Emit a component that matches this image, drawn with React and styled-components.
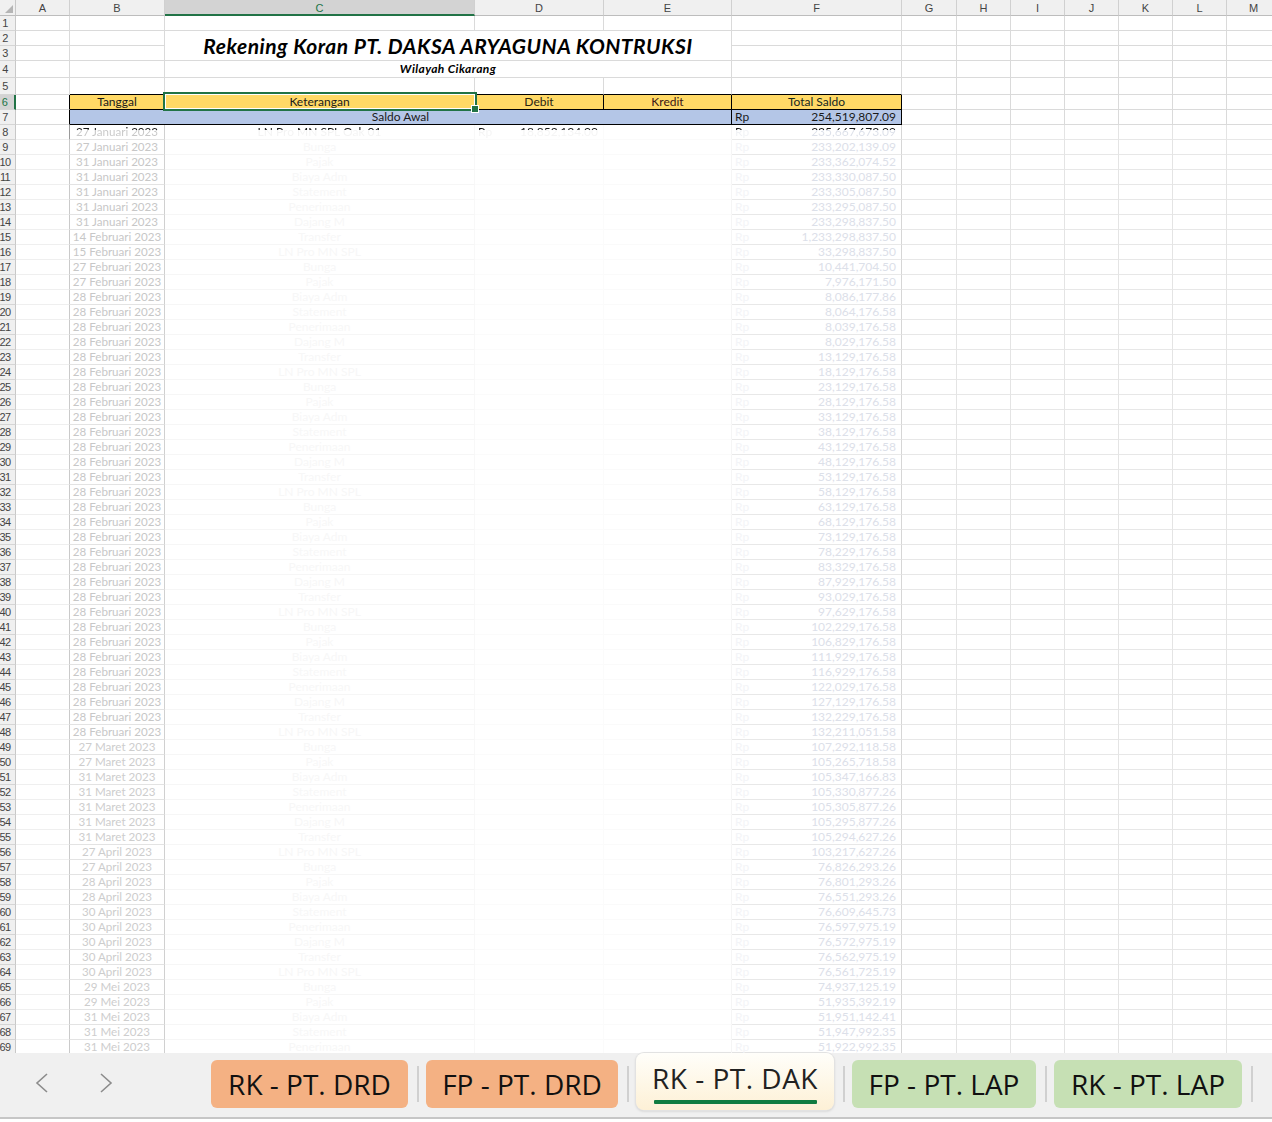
import React from 'react';
import styled, { createGlobalStyle } from 'styled-components';

const COLS = [16, 54, 95, 310, 129, 128, 170, 55, 54, 54, 54, 54, 54, 54];
const TEMPLATE = COLS.map((w) => w + 'px').join(' ');
const LETTERS = ['A', 'B', 'C', 'D', 'E', 'F', 'G', 'H', 'I', 'J', 'K', 'L', 'M'];
const GRID = '#dadada';
const GREEN = '#217346';

const rep = (v, n) => Array(n).fill(v);
const DATES = [
  ...rep('27 Januari 2023', 2), ...rep('31 Januari 2023', 5), '14 Februari 2023', '15 Februari 2023',
  ...rep('27 Februari 2023', 2), ...rep('28 Februari 2023', 30), ...rep('27 Maret 2023', 2),
  ...rep('31 Maret 2023', 5), ...rep('27 April 2023', 2), ...rep('28 April 2023', 2),
  ...rep('30 April 2023', 5), ...rep('29 Mei 2023', 2), ...rep('31 Mei 2023', 3),
];
const SALDO = [
  '235,667,673.09', '233,202,139.09', '233,362,074.52', '233,330,087.50', '233,305,087.50', '233,295,087.50',
  '233,298,837.50', '1,233,298,837.50', '33,298,837.50', '10,441,704.50', '7,976,171.50', '8,086,177.86',
  '8,064,176.58', '8,039,176.58', '8,029,176.58', '13,129,176.58', '18,129,176.58', '23,129,176.58',
  '28,129,176.58', '33,129,176.58', '38,129,176.58', '43,129,176.58', '48,129,176.58', '53,129,176.58',
  '58,129,176.58', '63,129,176.58', '68,129,176.58', '73,129,176.58', '78,229,176.58', '83,329,176.58',
  '87,929,176.58', '93,029,176.58', '97,629,176.58', '102,229,176.58', '106,829,176.58', '111,929,176.58',
  '116,929,176.58', '122,029,176.58', '127,129,176.58', '132,229,176.58', '132,211,051.58', '107,292,118.58',
  '105,265,718.58', '105,347,166.83', '105,330,877.26', '105,305,877.26', '105,295,877.26', '105,294,627.26',
  '103,217,627.26', '76,826,293.26', '76,801,293.26', '76,551,293.26', '76,609,645.73', '76,597,975.19',
  '76,572,975.19', '76,562,975.19', '76,561,725.19', '74,937,125.19', '51,935,392.19', '51,951,142.41',
  '51,947,992.35', '51,922,992.35',
];
const DESC_CYCLE = ['LN Pro MN SPL', 'Bunga', 'Pajak', 'Biaya Adm', 'Statement', 'Penerimaan', 'Dajang M', 'Transfer'];

const Global = createGlobalStyle`
  html, body { margin: 0; padding: 0; background: #fff; }
  body { width: 1272px; height: 1122px; overflow: hidden; font-family: Lato, "Noto Sans", sans-serif; }
  * { box-sizing: border-box; }
`;

const Window = styled.div`
  display: flex;
  flex-direction: column;
  width: 1272px;
  height: 1122px;
  overflow: hidden;
  background: #fff;
`;

const Sheet = styled.div`
  position: relative;
  flex: none;
  height: 1053px;
  overflow: hidden;
`;

const Row = styled.div`
  display: grid;
  grid-template-columns: ${TEMPLATE};
  grid-template-rows: ${(p) => p.$h || 15}px;
  height: ${(p) => p.$h || 15}px;
  width: max-content;
`;

const ColHead = styled.div`
  display: flex;
  align-items: center;
  justify-content: center;
  background: ${(p) => (p.$sel ? '#d3d3d3' : '#f0f0f0')};
  border-right: 1px solid #d0d0d0;
  border-bottom: ${(p) => (p.$sel ? `2px solid ${GREEN}` : '1px solid #bdbdbd')};
  color: ${(p) => (p.$sel ? GREEN : '#444')};
  font-family: "Liberation Sans", Arial, sans-serif;
  font-size: 11px;
  padding-top: ${(p) => (p.$sel ? 1 : 0)}px;
`;

const Corner = styled.div`
  background: #f0f0f0;
  border-right: 1px solid #c8c8c8;
  border-bottom: 1px solid #bdbdbd;
  display: flex;
  align-items: flex-end;
  justify-content: flex-end;
  padding: 0 2px 2px 0;
`;

const RowHead = styled.div`
  display: flex;
  align-items: center;
  justify-content: center;
  padding-right: 5px;
  background: ${(p) => (p.$sel ? '#d3d3d3' : '#f0f0f0')};
  border-right: ${(p) => (p.$sel ? `2px solid ${GREEN}` : '1px solid #c8c8c8')};
  border-bottom: 1px solid #d5d5d5;
  color: ${(p) => (p.$sel ? GREEN : '#444')};
  font-family: "Liberation Sans", Arial, sans-serif;
  font-size: 11px;
  letter-spacing: -0.6px;
  white-space: nowrap;
  overflow: visible;
`;

const Cell = styled.div`
  grid-column: span ${(p) => p.$span || 1};
  display: flex;
  align-items: center;
  justify-content: ${(p) => (p.$align === 'split' ? 'space-between' : 'center')};
  padding: 0 ${(p) => (p.$align === 'split' ? 5 : 3)}px 0 3px;
  background: ${(p) => p.$bg || 'transparent'};
  border-right: 1px solid ${(p) => p.$br || GRID};
  border-bottom: 1px solid ${(p) => p.$bb || GRID};
  color: ${(p) => p.$color || '#1a1a1a'};
  font-size: ${(p) => p.$fs || 12}px;
  white-space: nowrap;
  overflow: hidden;
  line-height: 1;
`;

const FadeText = styled.span`
  background: linear-gradient(to bottom, #1a1a1a 0, #1a1a1a 5px, ${(p) => p.$to} 5px);
  -webkit-background-clip: text;
  background-clip: text;
  color: transparent;
  padding: 1px 0;
`;

const TitleCell = styled.div`
  grid-column: span 3;
  align-self: start;
  height: ${(p) => p.$h}px;
  display: flex;
  align-items: center;
  justify-content: center;
  border-right: 1px solid ${GRID};
  border-bottom: 1px solid ${(p) => (p.$merged ? 'transparent' : GRID)};
  font-weight: 700;
  font-style: italic;
  font-size: ${(p) => p.$size}px;
  letter-spacing: ${(p) => p.$ls}px;
  color: #000;
  white-space: nowrap;
  line-height: 1;
  position: relative;
  z-index: 1;
`;

const Selection = styled.div`
  position: absolute;
  left: 163px;
  top: 92px;
  width: 314px;
  height: 19px;
  border: 2px solid ${GREEN};
  box-shadow: inset 0 0 0 1px #fff;
  pointer-events: none;
`;

const FillHandle = styled.div`
  position: absolute;
  left: 471px;
  top: 105px;
  width: 8px;
  height: 8px;
  background: ${GREEN};
  border: 1px solid #fff;
`;

const TabBar = styled.div`
  flex: none;
  height: 66px;
  background: #f0f0f0;
  border-bottom: 2px solid #c6c6c6;
  display: flex;
  align-items: center;
  padding-left: 35px;
`;

const Arrow = styled.button`
  all: unset;
  display: flex;
  width: 13px;
  height: 20px;
  margin-right: ${(p) => p.$mr}px;
  margin-top: -4px;
`;

const Tab = styled.div`
  flex: none;
  width: ${(p) => p.$w}px;
  height: 48px;
  margin-top: -2px;
  border-radius: 6px;
  background: ${(p) => p.$bg};
  display: flex;
  align-items: center;
  justify-content: center;
  font-family: "Open Sans", "Noto Sans", sans-serif;
  font-size: 28px;
  color: #111;
`;

const ActiveTab = styled.div`
  flex: none;
  align-self: flex-start;
  width: ${(p) => p.$w}px;
  height: 57px;
  border-radius: 8px;
  background: linear-gradient(to bottom, #fffefa 0%, #fef7e6 55%, #fdf0d6 100%);
  box-shadow: 0 0 0 1px #e2e2e2, 0 1px 3px rgba(0, 0, 0, 0.18);
  display: flex;
  flex-direction: column;
  align-items: center;
  padding-top: 6px;
  font-family: "Open Sans", "Noto Sans", sans-serif;
  font-size: 28px;
  color: #222;
  letter-spacing: 0.5px;
`;

const Underline = styled.span`
  display: block;
  width: 163px;
  height: 4px;
  margin-top: 3px;
  background: #107c41;
  border-radius: 1px;
`;

const Sep = styled.div`
  flex: none;
  width: 2px;
  height: 36px;
  margin: -2px 7px 0 9px;
  background: #d0d0d0;
`;

function Chevron({ dir }) {
  const pts = dir === 'left' ? '12,1 2,10 12,19' : '1,1 11,10 1,19';
  return (
    <svg width="13" height="20" viewBox="0 0 13 20">
      <polyline points={pts} fill="none" stroke="#8c8c8c" strokeWidth="1.6" />
    </svg>
  );
}

const emptyTail = (from, opts = {}) =>
  LETTERS.slice(from).map((l) => <Cell key={l} $br={opts.br} $bb={opts.bb} />);

function HeaderRow() {
  return (
    <Row $h={16}>
      <Corner>
        <svg width="8" height="8" viewBox="0 0 8 8">
          <polygon points="8,0 8,8 0,8" fill="#b5b5b5" />
        </svg>
      </Corner>
      {LETTERS.map((l) => (
        <ColHead key={l} $sel={l === 'C'}>{l}</ColHead>
      ))}
    </Row>
  );
}

function BodyRow({ n, i }) {
  const first = i === 0;
  const dateColor = n >= 49 ? '#cdcdcd' : '#c7c7c7';
  const saldoColor = '#dce0e9';
  const desc = first ? 'LN Pro MN SPL Oak 01' : DESC_CYCLE[i % DESC_CYCLE.length];
  return (
    <Row>
      <RowHead>{n}</RowHead>
      <Cell $br={first ? '#9a9a9a' : '#cacaca'} $bb="#efefef" />
      <Cell $br="#d0d0d0" $bb="#e3e3e3" $color={dateColor} $fs={11.6}>
        {first ? <FadeText $to={dateColor}>{DATES[i]}</FadeText> : DATES[i]}
      </Cell>
      <Cell $br="#f8f8f8" $bb="#f6f6f6" $color="#f7f7f7">
        {first ? <FadeText $to="#f3f3f3">{desc}</FadeText> : desc}
      </Cell>
      <Cell $br="#fbfbfb" $bb="#fbfbfb" $align="split">
        {first ? (
          <>
            <FadeText $to="#f4f4f4">Rp</FadeText>
            <FadeText $to="#f4f4f4">18,852,134.00</FadeText>
          </>
        ) : null}
      </Cell>
      <Cell $br="#f5f5f5" $bb="#fafafa" />
      <Cell $br="#d6d6d6" $bb="#e8e8e8" $align="split" $color={saldoColor}>
        {first ? <FadeText $to="#f0f2f5">Rp</FadeText> : <span style={{ color: '#f3f4f7' }}>Rp</span>}
        {first ? <FadeText $to={saldoColor}>{SALDO[i]}</FadeText> : <span>{SALDO[i]}</span>}
      </Cell>
      {emptyTail(6, { br: '#e4e4e4', bb: '#e7e7e7' })}
    </Row>
  );
}

export default function App() {
  const top = [1, 2, 3, 4, 5];
  return (
    <Window>
      <Global />
      <Sheet>
        <HeaderRow />
        {top.map((n) => {
          const h = n === 4 || n === 5 ? 17 : 15;
          const last = n === 5;
          return (
            <Row key={n} $h={h}>
              <RowHead>{n}</RowHead>
              <Cell />
              <Cell $bb={last ? '#000' : GRID} />
              {n === 2 ? (
                <TitleCell $h={30} $size={21} $ls={0.5} $merged>
                  Rekening Koran PT. DAKSA ARYAGUNA KONTRUKSI
                </TitleCell>
              ) : n === 3 ? (
                <Cell $span={3} />
              ) : n === 4 ? (
                <TitleCell $h={17} $size={12} $ls={0.4}>
                  Wilayah Cikarang
                </TitleCell>
              ) : (
                <>
                  <Cell $bb={last ? '#000' : GRID} />
                  <Cell $bb={last ? '#000' : GRID} />
                  <Cell $bb={last ? '#000' : GRID} />
                </>
              )}
              <Cell $bb={last ? '#000' : GRID} />
              {emptyTail(6)}
            </Row>
          );
        })}
        <Row>
          <RowHead $sel>6</RowHead>
          <Cell $br="#000" />
          <Cell $bg="#ffd966" $br="#000" $bb="#000">Tanggal</Cell>
          <Cell $bg="#ffd966" $br="#000" $bb="#000">Keterangan</Cell>
          <Cell $bg="#ffd966" $br="#000" $bb="#000" $color="#2a2412">Debit</Cell>
          <Cell $bg="#ffd966" $br="#000" $bb="#000" $color="#3b1616">Kredit</Cell>
          <Cell $bg="#ffd966" $br="#000" $bb="#000" $color="#16271f">Total Saldo</Cell>
          {emptyTail(6)}
        </Row>
        <Row>
          <RowHead>7</RowHead>
          <Cell $br="#000" />
          <Cell $span={4} $bg="#b4c6e7" $br="#000" $bb="#000">Saldo Awal</Cell>
          <Cell $bg="#b4c6e7" $br="#000" $bb="#000" $align="split">
            <span>Rp</span>
            <span>254,519,807.09</span>
          </Cell>
          {emptyTail(6)}
        </Row>
        {DATES.map((d, i) => (
          <BodyRow key={i} n={i + 8} i={i} />
        ))}
        <Selection />
        <FillHandle />
      </Sheet>
      <TabBar>
        <Arrow $mr={52} aria-label="previous sheet"><Chevron dir="left" /></Arrow>
        <Arrow $mr={98} aria-label="next sheet"><Chevron dir="right" /></Arrow>
        <Tab $w={197} $bg="#f4b183">RK - PT. DRD</Tab>
        <Sep />
        <Tab $w={192} $bg="#f4b183">FP - PT. DRD</Tab>
        <Sep />
        <ActiveTab $w={198}>
          <span>RK - PT. DAK</span>
          <Underline />
        </ActiveTab>
        <Sep />
        <Tab $w={184} $bg="#c6e0b4">FP - PT. LAP</Tab>
        <Sep />
        <Tab $w={188} $bg="#c6e0b4">RK - PT. LAP</Tab>
        <Sep />
      </TabBar>
    </Window>
  );
}
